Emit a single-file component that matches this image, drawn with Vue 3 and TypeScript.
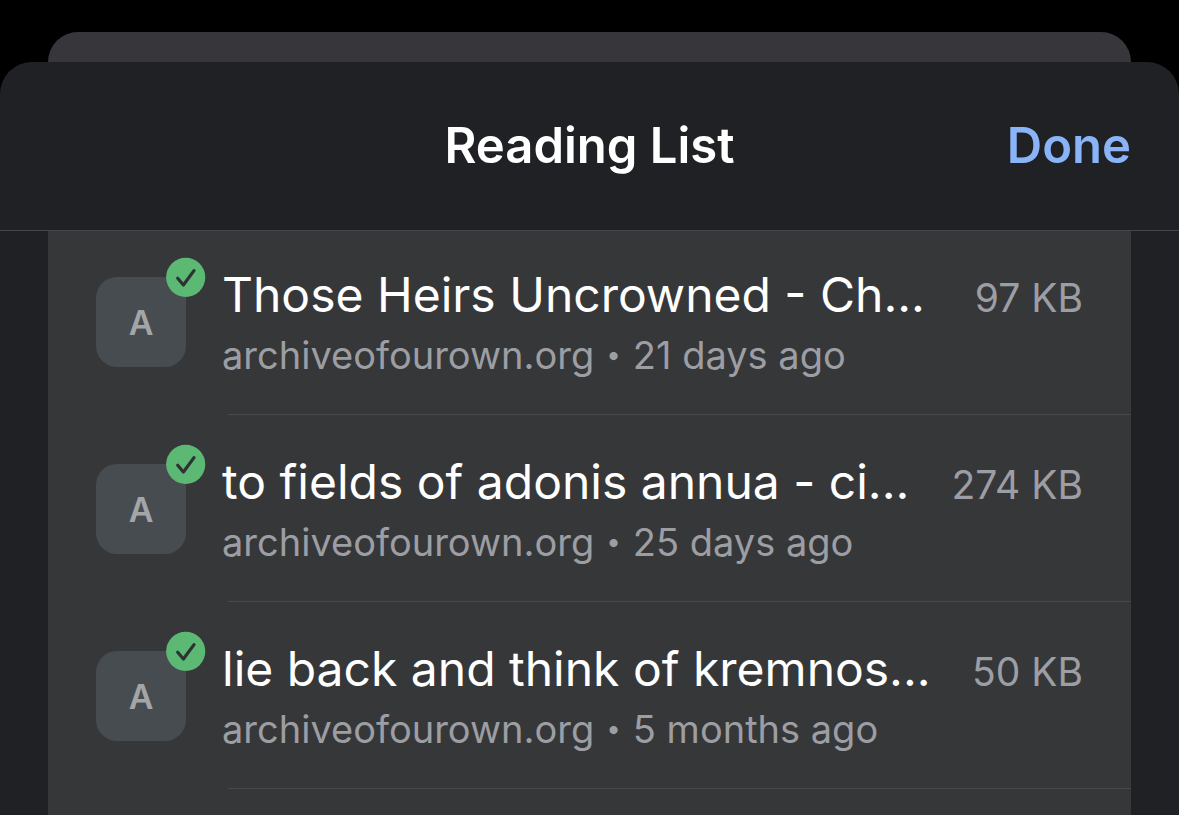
<script setup lang="ts">
interface Entry {
  title: string
  site: string
  age: string
  size: string
}

const entries: Entry[] = [
  { title: 'Those Heirs Uncrowned - Ch...', site: 'archiveofourown.org', age: '21 days ago', size: '97 KB' },
  { title: 'to fields of adonis annua - ci...', site: 'archiveofourown.org', age: '25 days ago', size: '274 KB' },
  { title: 'lie back and think of kremnos...', site: 'archiveofourown.org', age: '5 months ago', size: '50 KB' },
]
</script>

<template>
  <div class="screen">
    <div class="backdrop-sheet"></div>
    <main class="sheet">
      <header class="bar">
        <span></span>
        <h1>Reading List</h1>
        <button type="button" class="done">Done</button>
      </header>
      <ul class="list">
        <li v-for="entry in entries" :key="entry.title" class="row">
          <div class="icon">
            A
            <svg class="badge" viewBox="0 0 40 40" aria-hidden="true">
              <circle cx="19.7" cy="20.3" r="19.6" fill="#5bb974" />
              <path d="M11.7 21.2L17.4 28L28 13.6" fill="none" stroke="#303134" stroke-width="3.2" stroke-linecap="round" stroke-linejoin="round" />
            </svg>
          </div>
          <div class="content">
            <div class="top">
              <span class="title">{{ entry.title }}</span>
              <span class="size">{{ entry.size }}</span>
            </div>
            <div class="meta">
              <span>{{ entry.site }}</span>
              <span class="dot">•</span>
              <span>{{ entry.age }}</span>
            </div>
          </div>
        </li>
      </ul>
    </main>
  </div>
</template>

<style>
body {
  margin: 0;
  background: #000;
}
</style>

<style scoped>
.screen {
  display: flex;
  flex-direction: column;
  min-height: 100vh;
  box-sizing: border-box;
  padding-top: 32px;
  background: #000;
  color: #fff;
  font-family: Inter, Roboto, sans-serif;
}
.backdrop-sheet {
  height: 30px;
  margin: 0 48px;
  border-radius: 30px 30px 0 0;
  background: #37363a;
}
.sheet {
  flex: 1;
  display: flex;
  flex-direction: column;
  border-radius: 32px 32px 0 0;
  background: #202124;
}
.bar {
  display: grid;
  grid-template-columns: 1fr auto 1fr;
  align-items: center;
  box-sizing: border-box;
  height: 169px;
  border-bottom: 1px solid #454649;
  padding: 0 48px;
}
h1 {
  margin: 0;
  font-size: 49px;
  line-height: 60px;
  font-weight: 600;
}
.done {
  justify-self: end;
  padding: 0;
  border: 0;
  background: none;
  color: #8ab4f8;
  font: inherit;
  font-size: 49px;
  line-height: 60px;
  font-weight: 600;
}
.list {
  flex: 1;
  margin: 0 48px;
  padding: 0;
  list-style: none;
  background: #363739;
}
.row {
  display: flex;
  height: 187px;
  padding-left: 48px;
}
.icon {
  position: relative;
  flex: none;
  width: 90px;
  height: 90px;
  margin: 46px 42px 0 0;
  border-radius: 21px;
  background: #474c50;
  color: #a4a5a8;
  font-size: 34px;
  font-weight: 600;
  line-height: 92px;
  text-align: center;
}
.badge {
  position: absolute;
  top: -20px;
  right: -20px;
  width: 40px;
  height: 40px;
}
.content {
  flex: 1;
  min-width: 0;
  box-sizing: border-box;
  margin-bottom: 3px;
  padding: 34px 48px 0 0;
  border-bottom: 1px solid #48494d;
}
.top {
  display: flex;
  justify-content: space-between;
  align-items: baseline;
  margin-left: -6px;
  white-space: nowrap;
}
.title {
  font-size: 48px;
  line-height: 60px;
}
.size {
  color: #9d9ea4;
  font-size: 39px;
}
.meta {
  display: flex;
  gap: 12px;
  margin-left: -6px;
  color: #9d9ea4;
  font-size: 38px;
  line-height: 60px;
  white-space: nowrap;
}
.dot {
  font-size: 26px;
}
</style>
